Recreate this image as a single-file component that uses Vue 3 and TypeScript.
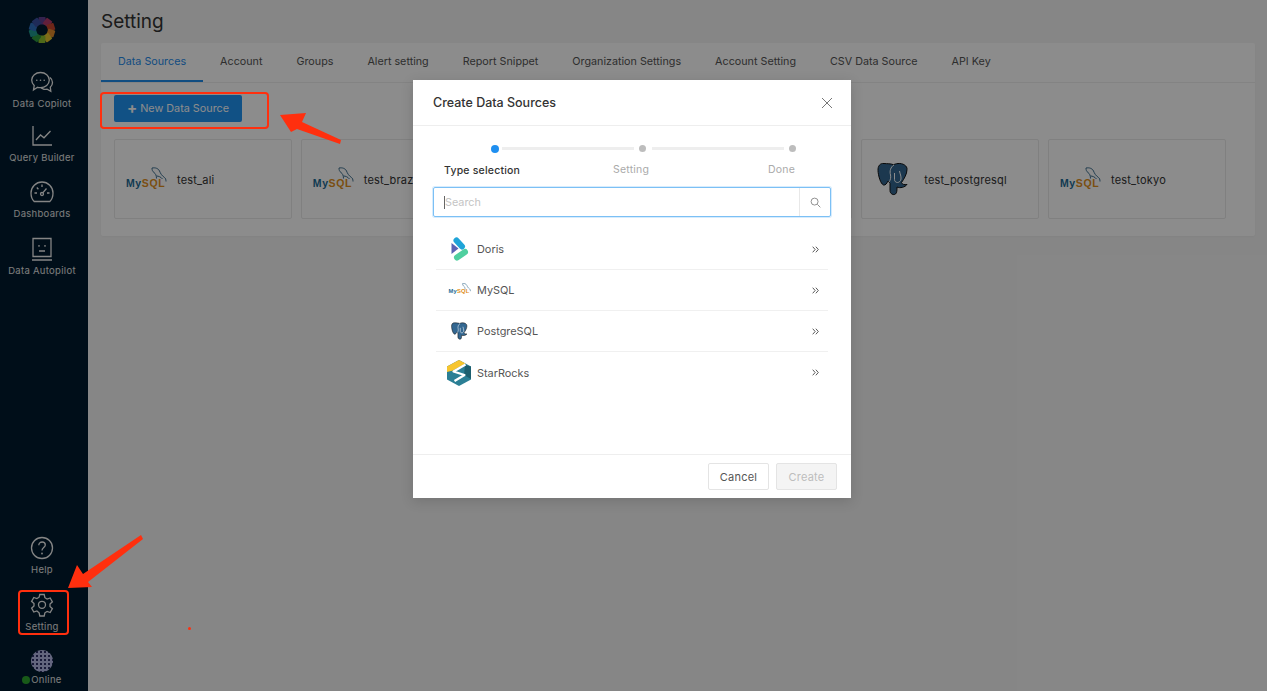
<template>
  <div class="app">
    <aside class="sidebar">
      <svg class="logo" viewBox="-14 -14 28 28" width="28" height="28">
        <rect
          v-for="(color, i) in petals"
          :key="i"
          x="-3.400"
          y="-13"
          width="7"
          height="7.400"
          rx="0.8"
          :fill="color"
          :transform="`rotate(${i * 36})`"
        />
      </svg>
      <div class="nav-item first">
        <svg viewBox="0 0 24 24" width="24" height="24" class="nav-icon">
          <path d="M10.5 2.5c5 0 8.8 3.4 8.8 7.6s-3.900 7.600-8.800 7.600c-1 0-2-.1-2.900-.4L3.500 20l.7-4.500C2.600 14 1.700 12.200 1.700 10.100c0-4.200 3.900-7.600 8.800-7.600z" />
          <path d="M20 7.500c1.600 1.300 2.500 3 2.500 5 0 1.800-.8 3.500-2.200 4.700l.5 4.100-3.700-2.200c-1 .3-2 .4-3.100.3l-3-1.500" />
          <circle cx="6.800" cy="10.200" r=".8" class="dot" />
          <circle cx="10.500" cy="10.200" r=".8" class="dot" />
          <circle cx="14.200" cy="10.200" r=".8" class="dot" />
        </svg>
        <span>Data Copilot</span>
      </div>
      <div class="nav-item second">
        <svg viewBox="0 0 24 24" width="24" height="24" class="nav-icon">
          <path d="M3 2v19h19" />
          <path d="M6 16l4.500-5 3.500 2.800L20.500 7" />
        </svg>
        <span>Query Builder</span>
      </div>
      <div class="nav-item">
        <svg viewBox="0 0 24 24" width="24" height="24" class="nav-icon">
          <path d="M4.200 21.500h15.600C21.800 19.600 23 16.500 23 13 23 6.900 18 2 12 2S1 6.900 1 13c0 3.500 1.200 6.600 3.200 8.500z" />
          <path d="M12 4.500v2.500M4.500 13H7M17 13h2.500M6.800 7.500l1.600 1.700M16.500 8.500l-3.500 4.200" />
          <circle cx="12" cy="14" r="1.500" />
        </svg>
        <span>Dashboards</span>
      </div>
      <div class="nav-item">
        <svg viewBox="0 0 24 24" width="24" height="24" class="nav-icon">
          <path d="M3 1.500h18v18H3zM2 23h20" />
          <path d="M9 8v1.800M15 8v1.800M9 14h6" />
        </svg>
        <span>Data Autopilot</span>
      </div>
      <div class="spacer"></div>
      <div class="nav-item">
        <svg viewBox="0 0 24 24" width="24" height="24" class="nav-icon">
          <circle cx="12" cy="12" r="10.500" />
          <path d="M8.800 9.200c0-1.900 1.500-3.200 3.300-3.200s3.200 1.200 3.200 2.900c0 2.700-3.300 2.700-3.300 5.600" />
          <circle cx="12" cy="17.500" r=".9" class="dot" />
        </svg>
        <span>Help</span>
      </div>
      <div class="nav-item">
        <svg viewBox="0 0 24 24" width="24" height="24" class="nav-icon">
          <path d="M9.800 1.500h4.400l.7 3.200 2.200 1.300 3.100-1 2.200 3.800-2.400 2.200v2.500l2.400 2.200-2.200 3.800-3.100-1-2.200 1.300-.7 3.200H9.800l-.7-3.200L6.900 18l-3.100 1-2.200-3.800L4 13v-2.500L1.600 8.300l2.200-3.800 3.100 1 2.200-1.300z" />
          <circle cx="12" cy="11.800" r="3.500" />
        </svg>
        <span>Setting</span>
      </div>
      <div class="nav-item user">
        <div class="avatar"></div>
        <span><i class="online"></i>Online</span>
      </div>
    </aside>

    <main class="main">
      <h1 class="title">Setting</h1>
      <section class="panel">
        <nav class="tabs">
          <a v-for="(tab, i) in tabs" :key="tab" class="tab" :class="{ active: i === 0 }">{{ tab }}</a>
        </nav>
        <div class="panel-body">
          <button class="primary" type="button"><b>+</b> New Data Source</button>
          <div class="cards">
            <div v-for="(card, i) in cards" :key="i" class="card">
              <template v-if="card.name">
                <svg v-if="card.pg" class="pg-big" viewBox="0 0 32 34" width="32" height="34">
                  <path class="pg" d="M7 1.500C3 1 .8 4 1 8.500c.2 5 2.600 13.500 5.500 14.500 2 .6 3.500-2 4.500-4 .9 1 1.800 1.400 2 2.500v7c0 3.500 3.500 5 5.500 3.500 1.500-1.200 1.500-4 1.500-7 3 1.500 8 .3 10-2.500-2.500.3-5 .2-5.500-2 2.500-3.500 5.500-8.500 5.500-13C30.500 4 26 1 21 1.500c-2 .2-3.500.8-4.500 1.200C13.500 1.500 10 1.800 7 1.500z" />
                  <path class="pg-line" d="M17 3c-3.500 2-4.500 6-3.500 10 .5 2.500 0 5-1.500 7M22.500 9c.5 3 1.800 5 1.500 8-.2 2-2 3.500-3.500 3.500-1.500 0-3-1-3-3V11" />
                </svg>
                <span v-else class="mysql"><span class="my">My</span><span class="sql">SQL</span><svg class="dolphin" viewBox="0 0 16 16" width="16" height="16"><path d="M1 1c3-.5 6 0 7.500 3 1 2.300 2 4.500 5 6.500 1 .7 1.500 2 1.500 4M1 1c0 2 .5 3.500 2 4.500 1.500 1 2.500 3 2.500 6M5.500 9c2 0 4.500 1 6 3" /></svg></span>
                <span class="card-name">{{ card.name }}</span>
              </template>
            </div>
          </div>
        </div>
      </section>
    </main>

    <div class="mask">
      <div class="modal">
        <header class="modal-head">
          <span>Create Data Sources</span>
          <svg viewBox="0 0 12 12" width="12" height="12" class="close"><path d="M1 1l10 10M11 1L1 11" /></svg>
        </header>
        <div class="modal-body">
          <div class="steps">
            <i class="step-dot on"></i><i class="step-line"></i><i class="step-dot"></i><i class="step-line"></i><i class="step-dot"></i>
          </div>
          <div class="step-labels">
            <b>Type selection</b>
            <span class="mid">Setting</span>
            <span>Done</span>
          </div>
          <div class="search">
            <span class="caret"></span>
            <span class="placeholder">Search</span>
            <span class="search-btn">
              <svg viewBox="0 0 12 12" width="11" height="11"><circle cx="5" cy="5" r="3.800" /><path d="M8 8l3.300 3.300" /></svg>
            </span>
          </div>
          <ul class="list">
            <li v-for="item in sources" :key="item" class="row">
              <span class="row-icon">
                <svg v-if="item === 'Doris'" viewBox="0 0 20 24" width="20" height="24">
                  <path d="M2.500 6v11l7-5.500z" fill="#5b62b3" />
                  <path d="M7.500 3.500l5.500 6" stroke="#1fa4d8" stroke-width="6" stroke-linecap="round" />
                  <path d="M8 20.500l8-5.500" stroke="#4fcf9f" stroke-width="6" stroke-linecap="round" />
                </svg>
                <span v-else-if="item === 'MySQL'" class="mysql tiny"><span class="my">My</span><span class="sql">SQL</span><svg class="dolphin" viewBox="0 0 16 16" width="9" height="9"><path d="M1 1c3-.5 6 0 7.500 3 1 2.300 2 4.500 5 6.500 1 .7 1.500 2 1.500 4M1 1c0 2 .5 3.500 2 4.500 1.500 1 2.500 3 2.500 6" /></svg></span>
                <svg v-else-if="item === 'PostgreSQL'" class="pg-small" viewBox="0 0 32 34" width="17" height="18">
                  <path class="pg" d="M7 1.500C3 1 .8 4 1 8.500c.2 5 2.600 13.500 5.500 14.500 2 .6 3.500-2 4.500-4 .9 1 1.800 1.400 2 2.500v7c0 3.500 3.500 5 5.500 3.500 1.500-1.200 1.500-4 1.500-7 3 1.500 8 .3 10-2.500-2.500.3-5 .2-5.500-2 2.500-3.500 5.500-8.500 5.500-13C30.500 4 26 1 21 1.500c-2 .2-3.500.8-4.500 1.200C13.500 1.500 10 1.800 7 1.500z" />
                  <path class="pg-line" d="M17 3c-3.500 2-4.500 6-3.500 10 .5 2.500 0 5-1.500 7M22.500 9c.5 3 1.800 5 1.500 8-.2 2-2 3.500-3.500 3.500-1.500 0-3-1-3-3V11" />
                </svg>
                <svg v-else viewBox="0 0 24 26" width="24" height="26">
                  <path d="M12 0l12 6.500v13L12 26 0 19.500v-13z" fill="#2b7f95" />
                  <path d="M0 6.500L12 0l6.500 3.500L6 10.500 0 12z" fill="#f7c52d" />
                  <path d="M18 5l6 1.500V19l-7-4z" fill="#1d5f6f" />
                  <path d="M18.500 4.500L6.500 11.500l11 3.500-10 6" fill="none" stroke="#fff" stroke-width="2.200" stroke-linejoin="round" />
                </svg>
              </span>
              <span class="row-name">{{ item }}</span>
              <svg viewBox="0 0 10 10" width="7" height="7" class="chev"><path d="M1 1l3.500 4L1 9M5.500 1L9 5 5.500 9" /></svg>
            </li>
          </ul>
        </div>
        <footer class="modal-foot">
          <button type="button" class="btn">Cancel</button>
          <button type="button" class="btn off">Create</button>
        </footer>
      </div>

      <div class="mark mark-new"></div>
      <div class="mark mark-setting"></div>
      <div class="speck"></div>
      <svg class="arrows" width="1267" height="691" viewBox="0 0 1267 691">
        <polygon points="280,115 306,113 302,122 341,140 340,144 297,129 291,132" />
        <polygon points="68,588 77,565 83,574 141,535 143,539 88,582 92,587" />
      </svg>
    </div>
  </div>
</template>

<script setup lang="ts">
const petals = ['#5f3f8f', '#b23a6a', '#c8452f', '#e08a2a', '#e8c52e', '#8fbf2f', '#2f9a3f', '#1f9a8f', '#2f6fc0', '#3a4fa0']

const tabs = [
  'Data Sources',
  'Account',
  'Groups',
  'Alert setting',
  'Report Snippet',
  'Organization Settings',
  'Account Setting',
  'CSV Data Source',
  'API Key'
]

// the third and fourth cards sit behind the modal, so they stay empty
const cards = [
  { name: 'test_ali', pg: false },
  { name: 'test_brazil', pg: false },
  { name: '', pg: false },
  { name: '', pg: false },
  { name: 'test_postgresql', pg: true },
  { name: 'test_tokyo', pg: false }
]

const sources = ['Doris', 'MySQL', 'PostgreSQL', 'StarRocks']
</script>

<style>
body {
  margin: 0;
  overflow: hidden;
}
</style>

<style scoped>
.app {
  display: flex;
  position: relative;
  width: 1267px;
  height: 691px;
  overflow: hidden;
  background: #f5f5f5;
  font-family: Inter, "Liberation Sans", sans-serif;
}

/* Sidebar */
.sidebar {
  display: flex;
  flex-direction: column;
  align-items: center;
  width: 88px;
  flex-shrink: 0;
  padding: 16px 4px 0 0;
  box-sizing: border-box;
  background: #001b2e;
}

.logo {
  margin-bottom: 8px;
}

.nav-item {
  display: flex;
  flex-direction: column;
  align-items: center;
  height: 57px;
  color: #e4e4e4;
  font-size: 9.500px;
  letter-spacing: 0.3px;
  line-height: 12px;
}

.nav-item.first {
  height: 54px;
  margin-top: 18px;
}

.nav-item.second {
  height: 56px;
}

.nav-item span {
  margin-top: 4px;
  white-space: nowrap;
}

.nav-icon {
  fill: none;
  stroke: #f2f2f2;
  stroke-width: 1.300;
}

.nav-icon .dot {
  fill: #f2f2f2;
  stroke: none;
}

.spacer {
  flex: 1;
}

.user {
  height: 41px;
}

.avatar {
  width: 22px;
  height: 22px;
  border-radius: 50%;
  background-color: #b5b8e6;
  background-image: radial-gradient(#2e3168 1.200px, transparent 1.300px);
  background-size: 4px 4px;
}

.user span {
  margin-top: 2px;
}

.online {
  display: inline-block;
  width: 8px;
  height: 8px;
  margin-right: 1px;
  border-radius: 50%;
  background: #2da52d;
  vertical-align: -1px;
}

/* Main */
.main {
  flex: 1;
  min-width: 0;
  padding: 0 12px 0 13px;
}

.title {
  margin: 10px 0 10px;
  color: #333;
  font-size: 19px;
  font-weight: 400;
  line-height: 23px;
}

.panel {
  border-radius: 2px;
  background: #fff;
  box-shadow: 0 1px 2px rgba(0, 0, 0, 0.04);
}

.tabs {
  display: flex;
  height: 39px;
  border-bottom: 1px solid #eee;
}

.tab {
  padding: 0 17px;
  color: #555;
  font-size: 10.750px;
  line-height: 38px;
  white-space: nowrap;
}

.tab.active {
  border-bottom: 2px solid #1f8ceb;
  color: #1f8ceb;
  height: 37px;
}

.panel-body {
  padding: 12px 29px 17px 13px;
}

.primary {
  display: block;
  width: 128px;
  height: 27px;
  padding: 0;
  border: 0;
  border-radius: 2px;
  background: #2094f3;
  color: #fff;
  font: inherit;
  font-size: 10.800px;
  line-height: 25px;
}

.primary b {
  font-size: 15px;
  line-height: 1;
  vertical-align: -1px;
}

.cards {
  display: grid;
  grid-template-columns: repeat(6, 1fr);
  gap: 8.800px;
  margin-top: 17px;
}

.card {
  display: flex;
  align-items: center;
  gap: 10px;
  height: 80px;
  padding-left: 11px;
  box-sizing: border-box;
  border: 1px solid #eaeaea;
  border-radius: 2px;
  color: #333;
  font-size: 11px;
  letter-spacing: 0.2px;
}

.card .pg-big {
  margin-left: 4px;
  margin-right: 5px;
}

.card-name {
  padding-top: 1px;
}

.mysql {
  position: relative;
  display: inline-block;
  width: 41px;
  padding-top: 8px;
  font-family: "Liberation Sans", sans-serif;
  font-size: 10.500px;
  font-weight: 700;
  letter-spacing: 0.6px;
  line-height: 12px;
  white-space: nowrap;
}

.my {
  color: #1d6a94;
}

.sql {
  color: #e08f1c;
}

.dolphin {
  position: absolute;
  top: -2px;
  right: 0;
  fill: none;
  stroke: #3d6f8f;
  stroke-width: 1;
}

.mysql.tiny {
  width: 21px;
  padding-top: 2px;
  font-size: 5.800px;
  letter-spacing: 0.2px;
  line-height: 7px;
}

.mysql.tiny .dolphin {
  top: -3px;
  right: -1px;
}

.pg {
  fill: #336791;
  stroke: #111;
  stroke-width: 1;
}

.pg-line {
  fill: none;
  stroke: #fff;
  stroke-width: 1;
}

/* Modal */
.mask {
  position: absolute;
  inset: 0;
  display: flex;
  justify-content: center;
  align-items: flex-start;
  padding: 80px 3px 0 0;
  background: rgba(0, 0, 0, 0.45);
}

.modal {
  display: flex;
  flex-direction: column;
  width: 438px;
  height: 418px;
  background: #fff;
  box-shadow: 0 3px 12px rgba(0, 0, 0, 0.15);
  color: #333;
}

.modal-head {
  display: flex;
  align-items: center;
  justify-content: space-between;
  height: 45px;
  padding: 0 18px 0 20px;
  border-bottom: 1px solid #eee;
  font-size: 12.500px;
  font-weight: 500;
}

.close {
  fill: none;
  stroke: #777;
  stroke-width: 1;
}

.modal-body {
  flex: 1;
  padding: 18px 20px 0;
}

.steps {
  display: flex;
  align-items: center;
  height: 9px;
  padding-left: 58px;
}

.step-dot {
  width: 7px;
  height: 7px;
  flex-shrink: 0;
  border-radius: 50%;
  background: #bdbdbd;
}

.step-dot.on {
  width: 8px;
  height: 8px;
  background: #1f8ff0;
}

.step-line {
  width: 132px;
  height: 3px;
  margin: 0 5px 0 6px;
  background: #eee;
}

.step-dot.on + .step-line {
  margin-left: 3px;
}

.step-labels {
  display: flex;
  justify-content: space-between;
  height: 34px;
  padding: 10px 36px 0 11px;
  box-sizing: border-box;
  color: #aaa;
  font-size: 10.500px;
  letter-spacing: 0.2px;
  line-height: 13px;
}

.step-labels .mid {
  margin-right: 26px;
}

.step-labels b {
  margin-top: 1px;
  color: #333;
  font-weight: 500;
}

.search {
  position: relative;
  display: flex;
  align-items: center;
  height: 30px;
  box-sizing: border-box;
  border: 1px solid #7cc0f5;
  border-radius: 2px;
  box-shadow: 0 0 0 1px rgba(32, 148, 243, 0.18);
}

.caret {
  width: 1px;
  height: 13px;
  margin-left: 10px;
  background: #666;
}

.placeholder {
  color: #c4c4c4;
  font-size: 10.800px;
}

.search-btn {
  display: flex;
  align-items: center;
  justify-content: center;
  width: 30px;
  height: 100%;
  margin-left: auto;
  border-left: 1px solid #e8e8e8;
}

.search-btn svg {
  fill: none;
  stroke: #888;
  stroke-width: 1;
}

.list {
  margin: 12px 3px 0;
  padding: 0;
  list-style: none;
}

.row {
  display: flex;
  align-items: center;
  height: 41px;
  border-bottom: 1px solid #f0f0f0;
  box-sizing: border-box;
  color: #555;
  font-size: 10.900px;
}

.row:last-child {
  border-bottom: 0;
}

.row-icon {
  display: flex;
  justify-content: center;
  width: 41px;
  padding-left: 5px;
  box-sizing: border-box;
  flex-shrink: 0;
}

.row-name {
  flex: 1;
}

.chev {
  margin-right: 9px;
  fill: none;
  stroke: #555;
  stroke-width: 1.400;
}

.modal-foot {
  display: flex;
  justify-content: flex-end;
  gap: 7px;
  height: 44px;
  padding: 8px 14px 0 0;
  box-sizing: border-box;
  border-top: 1px solid #eee;
}

.btn {
  width: 61px;
  height: 27px;
  padding: 0;
  border: 1px solid #e4e4e4;
  border-radius: 2px;
  background: #fff;
  color: #555;
  font: inherit;
  font-size: 11px;
  letter-spacing: 0.2px;
}

.btn.off {
  background: #f4f4f4;
  color: #bdbdbd;
}

/* Red annotations sit on top of the dimmed page */
.mark {
  position: absolute;
  box-sizing: border-box;
  border: 2px solid #ff2f0e;
  border-radius: 4px;
}

.mark-new {
  left: 100px;
  top: 92px;
  width: 169px;
  height: 37px;
}

.mark-setting {
  left: 18px;
  top: 590px;
  width: 51px;
  height: 45px;
}

.speck {
  position: absolute;
  left: 188px;
  top: 627px;
  width: 3px;
  height: 3px;
  border-radius: 50%;
  background: #ff2f0e;
}

.arrows {
  position: absolute;
  left: 0;
  top: 0;
  fill: #ff2f0e;
  pointer-events: none;
}
</style>
